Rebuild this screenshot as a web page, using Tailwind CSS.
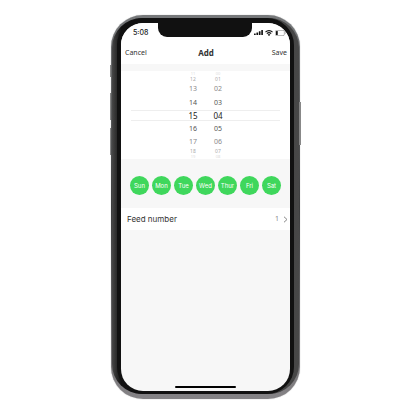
<!DOCTYPE html>
<html lang="en">

<head>
  <meta charset="UTF-8">
  <meta name="viewport" content="width=device-width, initial-scale=1.0">
  <title>Add</title>
  <script src="https://cdn.jsdelivr.net/npm/@tailwindcss/browser@4"></script>
</head>

<body class="flex h-screen justify-center bg-white pt-[15px] pr-[5px] pb-[17px] font-['Noto_Sans','Open_Sans',sans-serif] text-[#333]">

  <!-- Phone frame -->
  <div class="relative flex w-[46%] rounded-[32px] bg-linear-to-b from-[#77797b] via-[#3c3d3e] to-[#858386] px-px pt-[3px] pb-[5px] shadow-[0_0_1px_#999]">
    <span class="absolute top-[50px] -left-px h-3 w-px bg-[#858585]"></span>
    <span class="absolute top-[78px] -left-px h-[27px] w-px bg-[#858585]"></span>
    <span class="absolute top-[113px] -left-px h-[27px] w-px bg-[#858585]"></span>
    <span class="absolute top-[87px] -right-px h-[43px] w-[2px] bg-[#888]"></span>

    <div class="flex grow rounded-[30px] bg-linear-to-r from-[#484848] via-[#111] via-5% to-[#484848] px-[5px]">
      <div class="flex grow rounded-[27px] bg-[#111] px-[4px] pt-[5px] pb-[3px]">

        <!-- Screen -->
        <div class="relative flex grow flex-col overflow-hidden rounded-[22px] bg-[#f7f7f7]">
          <div class="absolute -top-1 left-1/2 h-[18px] w-[94px] -translate-x-1/2 rounded-b-[9px] bg-[#111]"></div>

          <header class="bg-white">
            <div class="flex h-[19px] items-center justify-between pr-1 pl-3">
              <span class="font-['Inter','Noto_Sans',sans-serif] text-[7px] leading-[19px] font-medium text-[#222]">5:08</span>
              <div class="flex items-center gap-[2px] text-[#111]">
                <svg class="h-[5px] w-[9px]" viewBox="0 0 16 10" preserveAspectRatio="none" fill="currentColor">
                  <rect x="0" y="7" width="3" height="3" rx="0.6" />
                  <rect x="4.3" y="5" width="3" height="5" rx="0.6" />
                  <rect x="8.6" y="2.6" width="3" height="7.4" rx="0.6" />
                  <rect x="12.9" y="0" width="3" height="10" rx="0.6" />
                </svg>
                <svg class="h-[6px] w-2" viewBox="0 0 16 12" fill="none" stroke="currentColor" stroke-width="2.4">
                  <path d="M1 4.2a10 10 0 0 1 14 0" />
                  <path d="M3.7 7.2a6.2 6.2 0 0 1 8.6 0" />
                  <path d="M8 12 5.4 9.3a3.6 3.6 0 0 1 5.2 0z" fill="currentColor" stroke="none" />
                </svg>
                <svg class="h-[6px] w-[11px]" viewBox="0 0 22 12" fill="none">
                  <rect x="0.7" y="0.7" width="18" height="10.6" rx="2.6" stroke="#888" stroke-width="1.3" />
                  <rect x="2" y="2" width="3.5" height="8" rx="1" fill="#111" />
                  <path d="M20.4 4v4c1.8-.7 1.8-3.3 0-4z" fill="#888" />
                </svg>
              </div>
            </div>
            <div class="grid h-[22px] grid-cols-3 items-center pr-[3px] pl-1 text-[7px] leading-[18px]">
              <button type="button" class="text-left">Cancel</button>
              <h1 class="text-center text-[8px] font-bold">Add</h1>
              <button type="button" class="text-right">Save</button>
            </div>
          </header>

          <!-- Time picker -->
          <section class="mt-[7px] flex h-[88px] flex-col justify-center bg-white px-[10px] text-center text-[7px]">
            <div class="flex justify-center gap-[13px] text-[4px] leading-[4px] text-[#ddd]"><span class="w-3">11</span><span class="w-3">00</span></div>
            <div class="flex justify-center gap-[13px] text-[5px] leading-[7px] text-[#aaa]"><span class="w-3">12</span><span class="w-3">01</span></div>
            <div class="flex justify-center gap-[13px] leading-[12px] text-[#888]"><span class="w-3">13</span><span class="w-3">02</span></div>
            <div class="flex justify-center gap-[13px] leading-[15px] text-[#555]"><span class="w-3">14</span><span class="w-3">03</span></div>
            <div class="flex justify-center gap-[13px] border-y border-[#eee] text-[8px] leading-[9px] text-[#222]"><span class="w-3">15</span><span class="w-3">04</span></div>
            <div class="flex justify-center gap-[13px] leading-[15px] text-[#555]"><span class="w-3">16</span><span class="w-3">05</span></div>
            <div class="flex justify-center gap-[13px] leading-[12px] text-[#888]"><span class="w-3">17</span><span class="w-3">06</span></div>
            <div class="flex justify-center gap-[13px] text-[5px] leading-[7px] text-[#aaa]"><span class="w-3">18</span><span class="w-3">07</span></div>
            <div class="flex justify-center gap-[13px] text-[4px] leading-[4px] text-[#ddd]"><span class="w-3">19</span><span class="w-3">08</span></div>
          </section>

          <!-- Repeat days -->
          <section class="flex justify-between px-[9px] pt-[17px] pb-[13px] font-['Inter','Noto_Sans',sans-serif] text-[6px] leading-[19px] text-white">
            <button type="button" class="size-[19px] rounded-full bg-[#3fd75c]">Sun</button>
            <button type="button" class="size-[19px] rounded-full bg-[#3fd75c]">Mon</button>
            <button type="button" class="size-[19px] rounded-full bg-[#3fd75c]">Tue</button>
            <button type="button" class="size-[19px] rounded-full bg-[#3fd75c]">Wed</button>
            <button type="button" class="size-[19px] rounded-full bg-[#3fd75c]">Thur</button>
            <button type="button" class="size-[19px] rounded-full bg-[#3fd75c]">Fri</button>
            <button type="button" class="size-[19px] rounded-full bg-[#3fd75c]">Sat</button>
          </section>

          <button type="button" class="flex h-[22px] items-center justify-between bg-white pr-[2px] pl-[6px] text-[8px] leading-[22px]">
            <span class="font-['Inter','Noto_Sans',sans-serif]">Feed number</span>
            <span class="flex items-center gap-1 text-[7px] text-[#888]">
              1
              <svg class="h-[7px] w-[5px]" viewBox="0 0 10 14" fill="none" stroke="currentColor" stroke-width="2">
                <path d="M2 1.5 8 7l-6 5.5" />
              </svg>
            </span>
          </button>

          <div class="mx-auto mt-auto mb-[3px] h-[2px] w-[61px] rounded-full bg-black"></div>
        </div>
      </div>
    </div>
  </div>

</body>

</html>
